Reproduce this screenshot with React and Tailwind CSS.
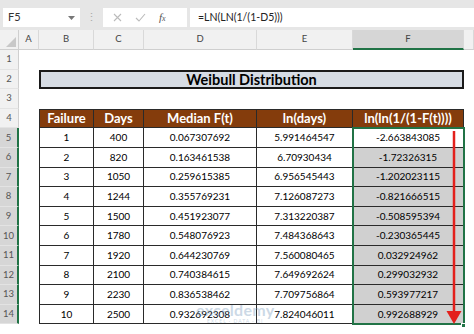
import React from "react";

const data = [
  [1, 400, "0.067307692", "5.991464547", "-2.663843085"],
  [2, 820, "0.163461538", "6.70930434", "-1.72326315"],
  [3, 1050, "0.259615385", "6.956545443", "-1.202023115"],
  [4, 1244, "0.355769231", "7.126087273", "-0.821666515"],
  [5, 1500, "0.451923077", "7.313220387", "-0.508595394"],
  [6, 1780, "0.548076923", "7.484368643", "-0.230365445"],
  [7, 1920, "0.644230769", "7.560080465", "0.032924962"],
  [8, 2100, "0.740384615", "7.649692624", "0.299032932"],
  [9, 2230, "0.836538462", "7.709756864", "0.593977217"],
  [10, 2500, "0.932692308", "7.824046011", "0.992688929"],
];

const colLetters = ["A", "B", "C", "D", "E", "F", ""];

// row header cell on the left
function RowHead({ n }) {
  const sel = n >= 5 && n <= 14;
  return (
    <div
      className={`flex items-center justify-center text-[9.5px] text-[#555] border-b border-[#e3e3e3] ${
        sel ? "bg-[#d6d6d6] border-r-2 border-r-[#217346]" : "bg-[#f1f1f1] border-r border-r-[#cfcfcf]"
      }`}
    >
      {n}
    </div>
  );
}

export default function App() {
  return (
    <div className="w-[474px] h-[334px] overflow-hidden bg-white" style={{ fontFamily: "Lato, 'Liberation Sans', sans-serif" }}>
      {/* formula bar */}
      <div className="h-[30px] bg-[#e6e6e6] flex items-start pt-[8px] gap-0">
        <div className="ml-[3px] w-[77px] h-[19px] bg-white flex items-center justify-between px-[5px]">
          <span className="text-[11px] text-[#333]">F5</span>
          <svg width="7" height="4" viewBox="0 0 7 4"><path d="M0 0h7L3.5 4z" fill="#777" /></svg>
        </div>
        <div className="w-[23px] h-[19px] flex items-center justify-center text-[#aaa] text-[11px]">⋮</div>
        <div className="w-[84px] h-[19px] bg-white flex items-center pl-[10px] gap-[13px]">
          <svg width="9" height="9" viewBox="0 0 9 9"><path d="M1 1l7 7M8 1l-7 7" stroke="#bbb" strokeWidth="1.1" /></svg>
          <svg width="11" height="9" viewBox="0 0 11 9"><path d="M1 5l3 3 6-7" stroke="#bbb" strokeWidth="1.1" fill="none" /></svg>
          <span className="text-[11px] italic text-[#555]" style={{ fontFamily: "'Liberation Serif', serif" }}>
            f<span className="text-[8px]">x</span>
          </span>
        </div>
        <div className="ml-[3px] flex-1 h-[19px] bg-white flex items-center pl-[8px]">
          <span className="text-[10.5px] text-[#222]">=LN(LN(1/(1-D5)))</span>
        </div>
      </div>

      {/* sheet */}
      <div className="relative">
        <div className="grid grid-cols-[19px_20px_55px_50px_113px_96px_111px_1fr] grid-rows-[20px_repeat(14,19.6px)]">
          {/* column headers */}
          <div className="bg-[#f1f1f1] border-b border-r border-[#cfcfcf] flex items-end justify-end p-[2px]">
            <svg width="10" height="10" viewBox="0 0 10 10"><path d="M10 0v10H0z" fill="#c8c8c8" /></svg>
          </div>
          {colLetters.map((c, i) => (
            <div
              key={i}
              className={`flex items-center justify-center text-[9.5px] text-[#444] border-r border-r-[#d9d9d9] ${
                c === "F" ? "bg-[#d6d6d6] border-b-2 border-b-[#217346]" : "bg-[#f1f1f1] border-b border-b-[#cfcfcf]"
              }`}
            >
              {c}
            </div>
          ))}

          {/* row 1 */}
          <RowHead n={1} />
          <div className="col-span-7" />

          {/* row 2 - title */}
          <RowHead n={2} />
          <div />
          <div className="col-span-5 bg-[#d6dce4] border-2 border-[#1a1a1a] flex items-center justify-center">
            <span className="text-[14.5px] font-bold text-black">Weibull Distribution</span>
          </div>
          <div />

          {/* row 3 */}
          <RowHead n={3} />
          <div className="col-span-7" />

          {/* row 4 - table header */}
          <RowHead n={4} />
          <div />
          {["Failure", "Days", "Median F(t)", "ln(days)", "ln(ln(1/(1-F(t))))"].map((h, i) => (
            <div
              key={h}
              className={`bg-[#843c0c] border-t border-b border-r border-[#2a2a2a] flex items-center justify-center text-white font-bold text-[13px] ${
                i === 0 ? "border-l" : ""
              }`}
            >
              {h}
            </div>
          ))}
          <div />

          {/* data rows */}
          {data.map((r, ri) => (
            <React.Fragment key={ri}>
              <RowHead n={ri + 5} />
              <div />
              {r.map((v, ci) => (
                <div
                  key={ci}
                  className={`border-b border-r border-[#2a2a2a] flex items-center justify-center text-[10px] text-black ${
                    ci === 0 ? "border-l" : ""
                  } ${ci === 4 && ri > 0 ? "bg-[#d0d0d0]" : ""}`}
                >
                  {v}
                </div>
              ))}
              <div />
            </React.Fragment>
          ))}
        </div>

        {/* selection range F5:F14 */}
        <div className="absolute left-[352px] top-[97.4px] w-[113px] h-[198px] border-2 border-[#217346] pointer-events-none" />
        <div className="absolute left-[461px] top-[292.5px] w-[5px] h-[5px] bg-[#217346] border border-white" />

        {/* red arrow */}
        <svg className="absolute left-0 top-0 pointer-events-none" width="474" height="304" viewBox="0 0 474 304">
          <line x1="454" y1="101" x2="454" y2="284" stroke="#e3201c" strokeWidth="2.5" />
          <path d="M446.5 281h15l-7.5 13z" fill="#e3201c" />
        </svg>

        {/* watermark */}
        <div className="absolute left-[196px] top-[272px] flex flex-col items-center opacity-35 pointer-events-none">
          <span className="text-[16px] font-bold text-[#6f93b8] leading-none tracking-[0.3px]">exceldemy</span>
          <span className="text-[5px] text-[#6f93b8] tracking-[1px] leading-none mt-[1px]">EXCEL · DATA · BI</span>
        </div>
      </div>
    </div>
  );
}
